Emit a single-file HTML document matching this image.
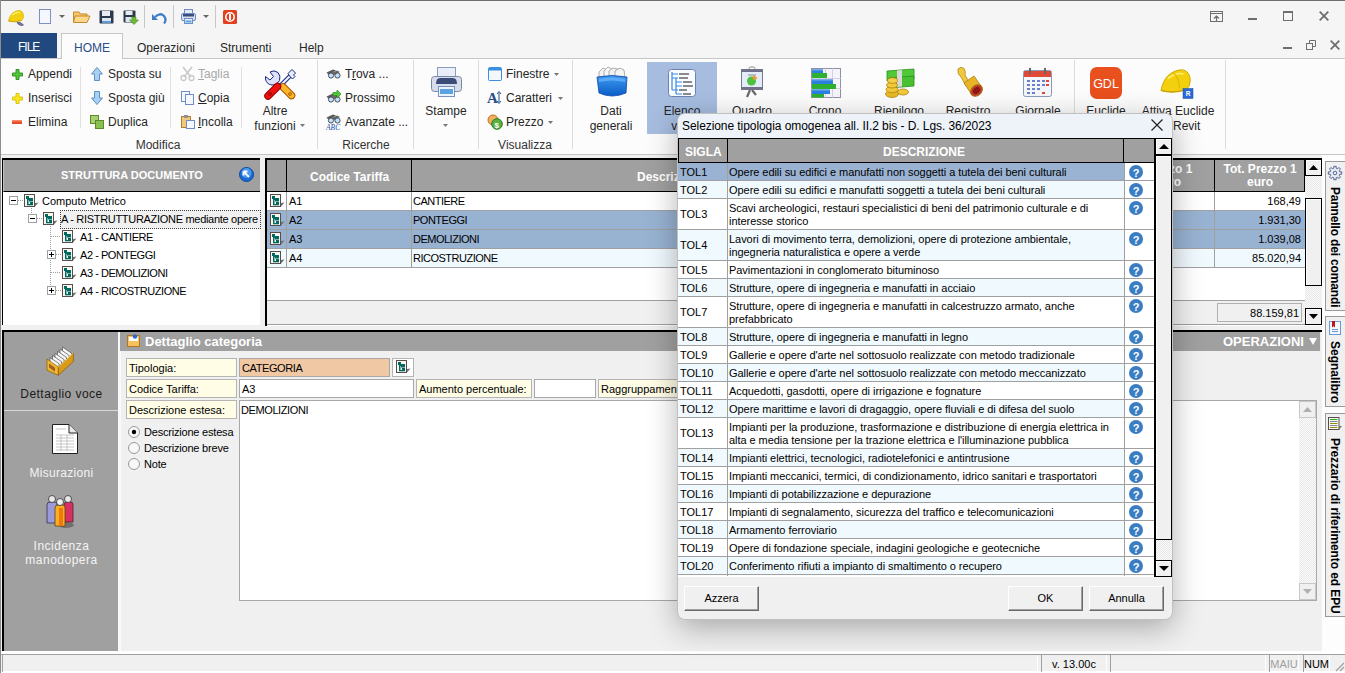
<!DOCTYPE html><html><head><meta charset="utf-8"><style>
*{box-sizing:border-box;margin:0;padding:0}
html,body{width:1345px;height:673px;overflow:hidden;background:#f0f0f0;font-family:"Liberation Sans",sans-serif;font-size:11px;color:#000}
.a{position:absolute}
.t{position:absolute;white-space:nowrap;line-height:1}
.rb{position:absolute;white-space:nowrap;line-height:1;font-size:12px;color:#262626}
.rc{position:absolute;white-space:nowrap;line-height:15px;font-size:12px;color:#262626;text-align:center}
.sep{position:absolute;width:1px;background:#dadada}
.hdr{position:absolute;background:#a0a0a0;color:#fff;font-weight:bold;font-size:11px}
svg{position:absolute;overflow:visible}
.u{text-decoration:underline}
</style></head><body>
<div class="a" style="left:0;top:0;width:1345px;height:33px;background:#f5f5f5"></div>
<div class="a" style="left:0;top:0;width:1345px;height:1px;background:#6e6e6e"></div>
<div class="a" style="left:0;top:0;width:1px;height:673px;background:#8c8c8c"></div>
<svg style="left:8px;top:10px" width="17" height="17" viewBox="0 0 17 17"><path d="M9 12 Q13 12 15.5 15 Q13 16.5 10 14Z" fill="#7878a8" stroke="#50507a" stroke-width="0.7"/><path d="M0.5 11 Q1.5 6 4 3.5 Q8 0 12 0.5 Q15.5 1.5 15.5 6 Q15.5 9 13.5 10.5 Q7 12.5 0.5 11Z" fill="#f2d010" stroke="#d8b000" stroke-width="0.7"/><path d="M4 5 Q8 1.5 12 2.5" fill="none" stroke="#fff070" stroke-width="1.2"/><path d="M0.5 11 Q7 13 13.5 10.5" fill="none" stroke="#c8a000" stroke-width="0.8"/></svg>
<svg style="left:39px;top:9px" width="12" height="15" viewBox="0 0 12 15"><rect x="0.5" y="0.5" width="11" height="14" fill="#f4f7fc" stroke="#7d8fc4"/></svg>
<svg style="left:59px;top:15px" width="6" height="4" viewBox="0 0 6 4"><path d="M0 0 L6 0 L3 3Z" fill="#666"/></svg>
<svg style="left:73px;top:11px" width="17" height="12" viewBox="0 0 17 12"><path d="M0.5 1 L6 1 L7.5 3 L14 3 L14 11 L0.5 11Z" fill="#f6c66a" stroke="#c78b2a"/><path d="M2 5 L17 5 L14 11.5 L0.5 11.5Z" fill="#fbd88b" stroke="#c78b2a"/></svg>
<svg style="left:99px;top:10px" width="15" height="14" viewBox="0 0 15 14"><rect x="0.5" y="0.5" width="14" height="13" rx="1" fill="#2d3a4e"/><rect x="3" y="1" width="8" height="5" fill="#e8ecf2"/><rect x="3" y="8" width="9" height="5" fill="#dde6f0"/><rect x="3" y="11" width="9" height="2" fill="#5b9bd5"/></svg>
<svg style="left:123px;top:10px" width="16" height="15" viewBox="0 0 16 15"><rect x="0.5" y="0.5" width="12" height="12" rx="1" fill="#2d3a4e"/><rect x="2.5" y="1" width="7" height="4" fill="#e8ecf2"/><rect x="2.5" y="7" width="8" height="5" fill="#dde6f0"/><path d="M9 7 L13 7 L13 10 L15.5 10 L11 14.5 L6.5 10 L9 10Z" fill="#6fb83a" stroke="#3f8a1c" stroke-width="0.6"/></svg>
<div class="sep" style="left:144px;top:5px;height:23px;background:#c8c8c8"></div>
<svg style="left:152px;top:12px" width="15" height="12" viewBox="0 0 15 12"><path d="M3 5 Q8 0 12 4 Q15 8 12 11.5" fill="none" stroke="#3d7cc9" stroke-width="2.2"/><path d="M0 2 L6 8 L0 8Z" fill="#3d7cc9"/></svg>
<div class="sep" style="left:173px;top:5px;height:23px;background:#c8c8c8"></div>
<svg style="left:181px;top:9px" width="15" height="15" viewBox="0 0 15 15"><rect x="3.5" y="0.5" width="8" height="5" fill="#e4ecf7" stroke="#6f8cc4"/><rect x="0.5" y="4.5" width="14" height="7" rx="1.5" fill="#d8e0ee" stroke="#6f8cc4"/><rect x="2" y="5" width="11" height="2.5" fill="#3a4d78"/><rect x="3.5" y="9.5" width="8" height="5" fill="#e4ecf7" stroke="#6f8cc4"/><rect x="4.5" y="11.5" width="6" height="2" fill="#5ea6e0"/></svg>
<svg style="left:203px;top:15px" width="6" height="4" viewBox="0 0 6 4"><path d="M0 0 L6 0 L3 3Z" fill="#666"/></svg>
<div class="sep" style="left:215px;top:5px;height:23px;background:#c8c8c8"></div>
<svg style="left:223px;top:10px" width="14" height="14" viewBox="0 0 14 14"><rect x="0" y="0" width="14" height="14" rx="1.5" fill="#e2401f"/><circle cx="7" cy="7" r="4.2" fill="none" stroke="#fff" stroke-width="1.6"/><rect x="6" y="4" width="2" height="6" fill="#fff"/></svg>
<svg style="left:1210px;top:11px" width="13" height="11" viewBox="0 0 13 11"><rect x="0.5" y="0.5" width="12" height="10" fill="none" stroke="#6e6e6e"/><path d="M0.5 2.5 H12.5" stroke="#6e6e6e"/><path d="M6.5 10 V5.5 M4 7.5 L6.5 5 L9 7.5" stroke="#6e6e6e" stroke-width="1.2" fill="none"/></svg>
<div class="a" style="left:1248px;top:18px;width:9px;height:2px;background:#6e6e6e"></div>
<svg style="left:1283px;top:11px" width="10" height="10" viewBox="0 0 10 10"><rect x="0.5" y="0.5" width="9" height="9" fill="none" stroke="#6e6e6e"/><rect x="0" y="0" width="10" height="2" fill="#6e6e6e"/></svg>
<svg style="left:1319px;top:11px" width="10" height="10" viewBox="0 0 10 10"><path d="M0.7 0.7 L9.3 9.3 M9.3 0.7 L0.7 9.3" stroke="#6e6e6e" stroke-width="1.8"/></svg>
<div class="a" style="left:1px;top:33px;width:1344px;height:25px;background:#f5f5f5"></div>
<div class="a" style="left:1px;top:33px;width:56px;height:26px;background:#22497f"></div>
<div class="t" style="left:18px;top:41px;font-size:12px;letter-spacing:-1px;color:#fff">FILE</div>
<div class="a" style="left:1px;top:58px;width:1344px;height:97px;background:#fcfcfc;border-top:1px solid #c6c6c6;border-bottom:1px solid #c6c6c6"></div>
<div class="a" style="left:61px;top:33px;width:62px;height:26px;background:#fcfcfc;border:1px solid #c6c6c6;border-bottom:none"></div>
<div class="t" style="left:74px;top:42px;font-size:12px;color:#2a4c87">HOME</div>
<div class="t" style="left:137px;top:42px;font-size:12px;color:#262626">Operazioni</div>
<div class="t" style="left:220px;top:42px;font-size:12px;color:#262626">Strumenti</div>
<div class="t" style="left:299px;top:42px;font-size:12px;color:#262626">Help</div>
<div class="a" style="left:1283px;top:47px;width:9px;height:2px;background:#6e6e6e"></div>
<svg style="left:1306px;top:40px" width="10" height="10" viewBox="0 0 10 10"><rect x="0.5" y="3.5" width="6" height="6" fill="none" stroke="#6e6e6e"/><path d="M3.5 3.5 V0.5 H9.5 V6.5 H6.5" fill="none" stroke="#6e6e6e"/></svg>
<svg style="left:1330px;top:40px" width="10" height="10" viewBox="0 0 10 10"><path d="M0.7 0.7 L9.3 9.3 M9.3 0.7 L0.7 9.3" stroke="#6e6e6e" stroke-width="1.8"/></svg>
<svg style="left:12px;top:69px" width="11" height="11" viewBox="0 0 11 11"><path d="M4 0.5 H7 V4 H10.5 V7 H7 V10.5 H4 V7 H0.5 V4 H4Z" fill="#50c838" stroke="#2a8a1e" stroke-width="0.9"/></svg>
<div class="rb" style="left:28px;top:68px;color:#262626">Appendi</div>
<svg style="left:12px;top:93px" width="11" height="11" viewBox="0 0 11 11"><path d="M4 0.5 H7 V4 H10.5 V7 H7 V10.5 H4 V7 H0.5 V4 H4Z" fill="#f8e820" stroke="#d8c000" stroke-width="0.9"/></svg>
<div class="rb" style="left:28px;top:92px;color:#262626">Inserisci</div>
<svg style="left:12px;top:120px" width="11" height="4" viewBox="0 0 11 4"><rect x="0" y="0" width="10" height="4" fill="#e84c2a"/><rect x="0" y="0" width="10" height="1.5" fill="#f58a6a"/></svg>
<div class="rb" style="left:28px;top:116px;color:#262626">Elimina</div>
<div class="sep" style="left:80px;top:67px;height:61px;background:#e0e0e0"></div>
<svg style="left:91px;top:67px" width="12" height="14" viewBox="0 0 12 14"><path d="M6 0.5 L11.5 7 L8.5 7 L8.5 13.5 L3.5 13.5 L3.5 7 L0.5 7Z" fill="#a9d0f0" stroke="#5b8fc8"/></svg>
<div class="rb" style="left:108px;top:68px;color:#262626">Sposta su</div>
<svg style="left:91px;top:91px" width="12" height="14" viewBox="0 0 12 14"><path d="M6 13.5 L11.5 7 L8.5 7 L8.5 0.5 L3.5 0.5 L3.5 7 L0.5 7Z" fill="#a9d0f0" stroke="#5b8fc8"/></svg>
<div class="rb" style="left:108px;top:92px;color:#262626">Sposta giù</div>
<svg style="left:90px;top:115px" width="14" height="14" viewBox="0 0 14 14"><rect x="0.5" y="0.5" width="8" height="8" fill="#a8d070" stroke="#5a8a2a"/><rect x="5.5" y="5.5" width="8" height="8" fill="#8ac050" stroke="#5a8a2a"/></svg>
<div class="rb" style="left:108px;top:116px;color:#262626">Duplica</div>
<div class="sep" style="left:170px;top:67px;height:61px;background:#e0e0e0"></div>
<svg style="left:180px;top:67px" width="15" height="14" viewBox="0 0 15 14"><path d="M3 0 L11 10 M12 0 L4 10" stroke="#c8c8c8" stroke-width="1.5"/><circle cx="3.5" cy="11" r="2.5" fill="none" stroke="#c8c8c8" stroke-width="1.3"/><circle cx="11.5" cy="11" r="2.5" fill="none" stroke="#c8c8c8" stroke-width="1.3"/></svg>
<div class="rb" style="left:198px;top:68px;color:#a8a8a8"><span class="u">T</span>aglia</div>
<svg style="left:181px;top:91px" width="13" height="14" viewBox="0 0 13 14"><rect x="0.5" y="0.5" width="8" height="10" fill="#f4f7fc" stroke="#6f8cc4"/><rect x="4.5" y="3.5" width="8" height="10" fill="#f4f7fc" stroke="#6f8cc4"/></svg>
<div class="rb" style="left:198px;top:92px;color:#262626"><span class="u">C</span>opia</div>
<svg style="left:181px;top:115px" width="14" height="14" viewBox="0 0 14 14"><rect x="0.5" y="1.5" width="9" height="11" fill="#f0c880" stroke="#b08030"/><rect x="3" y="0" width="4" height="3" fill="#909090"/><rect x="5.5" y="5.5" width="8" height="8" fill="#f4f7fc" stroke="#6f8cc4"/></svg>
<div class="rb" style="left:198px;top:116px;color:#262626"><span class="u">I</span>ncolla</div>
<div class="sep" style="left:241px;top:67px;height:61px;background:#e0e0e0"></div>
<svg style="left:262px;top:67px" width="35" height="33" viewBox="0 0 35 33"><path d="M18 19 L29 8" stroke="#1a2a80" stroke-width="4.2"/><path d="M18 19 L29 8" stroke="#eef0ff" stroke-width="2.2"/><path d="M26 6.5 L30 2.5 L33.5 6 L31.5 8 L33 9.5 L30.5 12 L27.5 9Z" fill="#e8ecff" stroke="#1a2a80" stroke-width="1"/><path d="M3.5 9.5 L8 13 L11.5 9.5 L8 5 Q12 2.5 16 5.5 Q19 9 17.5 13.5 Q15 18 10 18 Q4.5 17.5 3.5 12Z" fill="#dfe2fb" stroke="#1a2a80" stroke-width="1"/><path d="M29.5 28.5 L21 20" stroke="#a85000" stroke-width="7.5" stroke-linecap="round"/><path d="M29.5 28.5 L21 20" stroke="#f8b828" stroke-width="5.5" stroke-linecap="round"/><path d="M6 29 L15.5 19.5" stroke="#900000" stroke-width="7.5" stroke-linecap="round"/><path d="M6 29 L15.5 19.5" stroke="#f01010" stroke-width="5.5" stroke-linecap="round"/><circle cx="8" cy="27" r="1.4" fill="none" stroke="#900000" stroke-width="0.9"/><circle cx="28" cy="27" r="1.4" fill="none" stroke="#a85000" stroke-width="0.9"/></svg>
<div class="rc" style="left:215px;width:120px;top:104px">Altre<br>funzioni</div>
<svg style="left:300px;top:124px" width="6" height="3" viewBox="0 0 6 3"><path d="M0 0 L5 0 L2.5 3Z" fill="#777"/></svg>
<div class="rc" style="left:98px;width:120px;top:138px;color:#333">Modifica</div>
<div class="sep" style="left:317px;top:60px;height:89px;background:#dcdcdc"></div>
<svg style="left:326px;top:69px" width="15" height="11" viewBox="0 0 15 11"><path d="M0.5 3.5 L7 0.5 L10 1.5 L4 5Z" fill="#5a5a5a"/><path d="M5 4 L11 1.5 L14 3 L8 6Z" fill="#6a6a6a"/><path d="M0.5 3.5 L4 5 L8 6 L3 6Z" fill="#3a3a3a"/><circle cx="5" cy="6.5" r="2.6" fill="#c0e0ff" stroke="#404040" stroke-width="0.9"/><circle cx="11.5" cy="6.5" r="2.6" fill="#c0e0ff" stroke="#404040" stroke-width="0.9"/></svg>
<div class="rb" style="left:345px;top:68px;color:#262626">T<span class="u">r</span>ova ...</div>
<svg style="left:326px;top:93px" width="15" height="11" viewBox="0 0 15 11"><path d="M0.5 3.5 L7 0.5 L10 1.5 L4 5Z" fill="#5a5a5a"/><path d="M5 4 L11 1.5 L14 3 L8 6Z" fill="#6a6a6a"/><path d="M0.5 3.5 L4 5 L8 6 L3 6Z" fill="#3a3a3a"/><circle cx="5" cy="6.5" r="2.6" fill="#c0e0ff" stroke="#404040" stroke-width="0.9"/><circle cx="11.5" cy="6.5" r="2.6" fill="#c0e0ff" stroke="#404040" stroke-width="0.9"/><path d="M7 -0.5 L11 -0.5 L11 -3 L15 1 L11 5 L11 2.5 L7 2.5Z" fill="#50c838" stroke="#2a8a1e" stroke-width="0.7"/></svg>
<div class="rb" style="left:345px;top:92px;color:#262626">Prossimo</div>
<svg style="left:326px;top:114px" width="15" height="11" viewBox="0 0 15 11"><path d="M0.5 3.5 L7 0.5 L10 1.5 L4 5Z" fill="#5a5a5a"/><path d="M5 4 L11 1.5 L14 3 L8 6Z" fill="#6a6a6a"/><path d="M0.5 3.5 L4 5 L8 6 L3 6Z" fill="#3a3a3a"/><circle cx="5" cy="6.5" r="2.6" fill="#c0e0ff" stroke="#404040" stroke-width="0.9"/><circle cx="11.5" cy="6.5" r="2.6" fill="#c0e0ff" stroke="#404040" stroke-width="0.9"/><text x="0" y="15.5" font-family="Liberation Serif" font-style="italic" font-size="7.5" fill="#2050b0">ABC</text></svg>
<div class="rb" style="left:345px;top:116px;color:#262626">Avanzate ...</div>
<div class="sep" style="left:413px;top:60px;height:89px;background:#dcdcdc"></div>
<svg style="left:431px;top:67px" width="31" height="30" viewBox="0 0 31 30"><rect x="6.5" y="0.5" width="18" height="12" fill="#eaeef8" stroke="#8a9ac0"/><rect x="0.5" y="9.5" width="30" height="15" rx="3" fill="#d6dcea" stroke="#7a88a8"/><path d="M5 17 Q5 11 9 11 H22 Q26 11 26 17Z" fill="#3c4c78"/><rect x="7.5" y="19.5" width="16" height="10" fill="#eef3fb" stroke="#7a90c0"/><rect x="9" y="22" width="13" height="5" fill="#5aa2e2"/></svg>
<div class="rc" style="left:386px;width:120px;top:104px">Stampe</div>
<svg style="left:443px;top:124px" width="6" height="3" viewBox="0 0 6 3"><path d="M0 0 L5 0 L2.5 3Z" fill="#777"/></svg>
<div class="rc" style="left:306px;width:120px;top:138px;color:#333">Ricerche</div>
<div class="sep" style="left:478px;top:60px;height:89px;background:#dcdcdc"></div>
<svg style="left:488px;top:67px" width="14" height="14" viewBox="0 0 14 14"><rect x="0.5" y="0.5" width="13" height="13" rx="1" fill="#f4f7fc" stroke="#3a90e0"/><rect x="1" y="1" width="12" height="2.5" fill="#3a90e0"/></svg>
<div class="rb" style="left:506px;top:68px;color:#262626">Finestre</div>
<svg style="left:554px;top:73px" width="6" height="3" viewBox="0 0 6 3"><path d="M0 0 L5 0 L2.5 3Z" fill="#777"/></svg>
<svg style="left:487px;top:91px" width="16" height="13" viewBox="0 0 16 13"><text x="0" y="12" font-family="Liberation Serif" font-weight="bold" font-size="15" fill="#2a4c87">A</text><path d="M12 2 V11 M10 3 L12 0.5 L14 3 M10 10 L12 12.5 L14 10" stroke="#2a4c87" fill="none"/></svg>
<div class="rb" style="left:506px;top:92px;color:#262626">Caratteri</div>
<svg style="left:558px;top:97px" width="6" height="3" viewBox="0 0 6 3"><path d="M0 0 L5 0 L2.5 3Z" fill="#777"/></svg>
<svg style="left:487px;top:114px" width="16" height="16" viewBox="0 0 16 16"><circle cx="6" cy="6" r="5" fill="#f0b060" stroke="#c07020"/><circle cx="10" cy="10" r="5.3" fill="#5cb040" stroke="#2a7a1e"/><text x="7.5" y="13.5" font-family="Liberation Sans" font-weight="bold" font-size="8" fill="#fff">$</text></svg>
<div class="rb" style="left:506px;top:116px;color:#262626">Prezzo</div>
<svg style="left:548px;top:121px" width="6" height="3" viewBox="0 0 6 3"><path d="M0 0 L5 0 L2.5 3Z" fill="#777"/></svg>
<div class="rc" style="left:465px;width:120px;top:138px;color:#333">Visualizza</div>
<div class="sep" style="left:572px;top:60px;height:89px;background:#dcdcdc"></div>
<div class="a" style="left:647px;top:62px;width:70px;height:72px;background:#a6bde0"></div>
<svg style="left:596px;top:66px" width="32" height="32" viewBox="0 0 32 32"><defs><linearGradient id="bx" x1="0" y1="0" x2="0" y2="1"><stop offset="0" stop-color="#3f9af0"/><stop offset="1" stop-color="#0a5cc8"/></linearGradient></defs><path d="M3 6 L7 2 L11 4 L11 12 L3 12Z" fill="#f2f2f2" stroke="#9a9a9a" stroke-width="0.8"/><path d="M8 5 L12 1 L16 3 L17 12 L8 12Z" fill="#f6f6f6" stroke="#9a9a9a" stroke-width="0.8"/><path d="M13 5 L17 2 L22 3 L22 12 L13 12Z" fill="#f0f0f0" stroke="#9a9a9a" stroke-width="0.8"/><path d="M19 5 L24 2 L28 4 L29 12 L19 12Z" fill="#f4f4f4" stroke="#9a9a9a" stroke-width="0.8"/><path d="M1 11 Q16 8 31 11 L30 27 Q16 33 3 27Z" fill="url(#bx)" stroke="#0a4aa8" stroke-width="0.8"/><path d="M3 13 Q16 10 29 13 L29 16 Q16 13 3 16Z" fill="#6cb8ff" opacity="0.7"/></svg>
<div class="rc" style="left:551px;width:120px;top:104px">Dati<br>generali</div>
<svg style="left:668px;top:69px" width="28" height="28" viewBox="0 0 28 28"><rect x="0.5" y="0.5" width="27" height="27" rx="3" fill="#f8fbff" stroke="#7080b0"/><path d="M4 3 V21 M4 5 H10 M4 9 H10 M8 9 V25 M8 13 H14 M8 17 H14 M4 21 H10 M8 25 H14" stroke="#3a8ae0" stroke-width="1.2" fill="none"/><g stroke="#8a8a8a" stroke-width="2"><path d="M11 5 H21 M11 9 H20 M15 13 H24 M15 17 H25 M11 21 H19 M15 25 H23"/></g></svg>
<div class="rc" style="left:622px;width:120px;top:104px">Elenco<br>voci</div>
<svg style="left:741px;top:67px" width="23" height="31" viewBox="0 0 23 31"><rect x="8" y="0" width="6" height="3" rx="1.5" fill="none" stroke="#8a8a8a"/><rect x="0.5" y="2.5" width="21" height="20" fill="#e4ecf8" stroke="#7a7a8a"/><rect x="0.5" y="2.5" width="21" height="2.5" fill="#70708a"/><rect x="0.5" y="20" width="21" height="2.5" fill="#70708a"/><path d="M7 8 H15" stroke="#8a8a9a"/><circle cx="10.5" cy="14" r="4.5" fill="#4cc040"/><path d="M12 8.5 L12 13 L16.5 11.5 Q15.5 9 12 8.5Z" fill="#f89830"/><path d="M9 23 L6 30 M11 23 L15 28" stroke="#6a6a6a" stroke-width="2.2"/></svg>
<div class="rc" style="left:692px;width:120px;top:104px">Quadro</div>
<svg style="left:811px;top:68px" width="30" height="30" viewBox="0 0 30 30"><rect x="0.5" y="0.5" width="29" height="29" fill="#f4f4fa" stroke="#9090a8"/><path d="M14.5 0 V30 M21.5 0 V30 M0 10.5 H30 M0 20.5 H30" stroke="#c8c8d8" stroke-width="0.8"/><rect x="1" y="1" width="11" height="4" fill="#2a80e0"/><rect x="1" y="5" width="15" height="5" fill="#30b030"/><rect x="1" y="11" width="21" height="5" fill="#2a80e0"/><rect x="1" y="16" width="24" height="5" fill="#30b030"/><rect x="1" y="21" width="18" height="5" fill="#2a80e0"/><rect x="1" y="26" width="12" height="3.5" fill="#30b030"/><g fill="#fff" opacity="0.35"><rect x="1" y="1" width="11" height="1.5"/><rect x="1" y="11" width="21" height="1.5"/><rect x="1" y="21" width="18" height="1.5"/></g></svg>
<div class="rc" style="left:765px;width:120px;top:104px">Crono</div>
<svg style="left:883px;top:68px" width="33" height="30" viewBox="0 0 33 30"><path d="M4 3 L31 1 L31 11 L4 13Z" fill="#50c838" stroke="#2a9020" stroke-width="0.8"/><path d="M6 10 L31 8 L31 18 L6 20Z" fill="#48c030" stroke="#2a9020" stroke-width="0.8"/><path d="M14 2.5 L19 2 L19 18.5 L14 19Z" fill="#d8d8d8"/><ellipse cx="9" cy="26" rx="6.5" ry="3.5" fill="#e8b828" stroke="#b08010" stroke-width="0.8"/><ellipse cx="9" cy="21.5" rx="6" ry="3.2" fill="#f0c838" stroke="#b08010" stroke-width="0.8"/><ellipse cx="9" cy="17" rx="5.5" ry="3" fill="#f0c838" stroke="#b08010" stroke-width="0.8"/><ellipse cx="9.5" cy="12.5" rx="5" ry="2.8" fill="#f4d048" stroke="#b08010" stroke-width="0.8"/><ellipse cx="20" cy="24" rx="5.5" ry="3" fill="#f0c838" stroke="#b08010" stroke-width="0.8"/></svg>
<div class="rc" style="left:839px;width:120px;top:104px">Riepilogo</div>
<svg style="left:956px;top:67px" width="26" height="31" viewBox="0 0 26 31"><path d="M2 2 Q5 -1 8 1.5 Q10 4 9 8 L14 16 L10 19 L5 10 Q1 7 2 2Z" fill="#f0c840" stroke="#b08a10" stroke-width="0.8"/><path d="M8 16 L18 9 L25 19 L16 28Z" fill="#e8b428" stroke="#a88010" stroke-width="0.8"/><ellipse cx="20.5" cy="23.5" rx="6.5" ry="5" transform="rotate(-40 20.5 23.5)" fill="#c83828" stroke="#a07010"/><ellipse cx="20.5" cy="23.5" rx="4" ry="3" transform="rotate(-40 20.5 23.5)" fill="#8a1818"/></svg>
<div class="rc" style="left:908px;width:120px;top:104px">Registro</div>
<svg style="left:1023px;top:68px" width="29" height="29" viewBox="0 0 29 29"><rect x="0.5" y="2.5" width="28" height="26" rx="2" fill="#f4f6fa" stroke="#8a9ab8"/><rect x="1" y="3" width="27" height="6" fill="#e04838"/><path d="M7 0 V6 M22 0 V6" stroke="#666" stroke-width="2"/><g fill="#6a80c8"><rect x="4" y="12" width="3" height="2"/><rect x="9" y="12" width="3" height="2"/><rect x="14" y="12" width="3" height="2"/><rect x="19" y="12" width="3" height="2"/><rect x="4" y="16" width="3" height="2"/><rect x="9" y="16" width="3" height="2"/><rect x="14" y="16" width="3" height="2"/><rect x="19" y="16" width="3" height="2"/><rect x="4" y="20" width="3" height="2"/><rect x="9" y="20" width="3" height="2"/><rect x="14" y="20" width="3" height="2"/><rect x="4" y="24" width="3" height="2"/><rect x="9" y="24" width="3" height="2"/></g><g fill="#e04838"><rect x="23" y="12" width="3" height="2"/><rect x="23" y="16" width="3" height="2"/><rect x="19" y="24" width="3" height="2"/></g></svg>
<div class="rc" style="left:978px;width:120px;top:104px">Giornale</div>
<div class="sep" style="left:1074px;top:60px;height:89px;background:#dcdcdc"></div>
<svg style="left:1090px;top:67px" width="32" height="32" viewBox="0 0 32 32"><rect x="0" y="0" width="32" height="32" rx="7" fill="#e8501e"/><text x="16" y="20.5" text-anchor="middle" font-family="Liberation Sans" font-size="12.5" fill="#fff">GDL</text></svg>
<div class="rc" style="left:1046px;width:120px;top:104px">Euclide</div>
<svg style="left:1160px;top:69px" width="34" height="30" viewBox="0 0 34 30"><g transform="scale(1.95)"><path d="M0.5 11 Q1.5 6 4 3.5 Q8 0 12 0.5 Q15.5 1.5 15.5 6 Q15.5 9 13.5 10.5 Q7 12.5 0.5 11Z" fill="#f2d010" stroke="#d0a800" stroke-width="0.5"/><path d="M4 5 Q8 1.5 12 2.5" fill="none" stroke="#fff070" stroke-width="0.8"/><path d="M7 2 Q10 5 10 10" fill="none" stroke="#e0b800" stroke-width="0.6"/><path d="M0.5 11 Q7 13 13.5 10.5" fill="none" stroke="#c8a000" stroke-width="0.6"/></g><rect x="23" y="19.5" width="10" height="10" fill="#2a6ad8" stroke="#1a4aa0" stroke-width="0.5"/><text x="28" y="27" text-anchor="middle" font-family="Liberation Sans" font-weight="bold" font-size="6.5" fill="#fff">R</text></svg>
<div class="rc" style="left:1118px;width:120px;top:104px">Attiva Euclide</div>
<div class="rb" style="left:1173px;top:120px;color:#262626">Revit</div>
<div class="sep" style="left:1225px;top:60px;height:89px;background:#dcdcdc"></div>
<div class="a" style="left:2px;top:158px;width:258px;height:167px;background:#fff;border-top:2px solid #000;border-left:1px solid #000"></div>
<div class="hdr" style="left:3px;top:160px;width:257px;height:32px;border-bottom:1px solid #000;border-left:1px solid #c0c0c0"></div>
<div class="t" style="left:61px;top:170px;font-size:11px;font-weight:bold;color:#fff">STRUTTURA DOCUMENTO</div>
<svg style="left:239px;top:167px" width="15" height="15" viewBox="0 0 15 15"><circle cx="7.5" cy="7.5" r="7" fill="#1a6ad0" stroke="#0a4aa0"/><circle cx="7.5" cy="6" r="5" fill="#4a9af0"/><path d="M4.5 4.5 L10 10 M4.5 4.5 H8.5 M4.5 4.5 V8.5" stroke="#fff" stroke-width="1.8" fill="none"/></svg>
<div class="a" style="left:31px;top:206px;width:1px;height:8px;background:repeating-linear-gradient(180deg,#a0a0a0 0 1px,transparent 1px 2px)"></div>
<div class="a" style="left:50px;top:224px;width:1px;height:68px;background:repeating-linear-gradient(180deg,#a0a0a0 0 1px,transparent 1px 2px)"></div>
<div class="a" style="left:18px;top:200px;width:5px;height:1px;background:repeating-linear-gradient(90deg,#a0a0a0 0 1px,transparent 1px 2px)"></div>
<div class="a" style="left:37px;top:218px;width:5px;height:1px;background:repeating-linear-gradient(90deg,#a0a0a0 0 1px,transparent 1px 2px)"></div>
<div class="a" style="left:51px;top:236px;width:10px;height:1px;background:repeating-linear-gradient(90deg,#a0a0a0 0 1px,transparent 1px 2px)"></div>
<div class="a" style="left:56px;top:254px;width:5px;height:1px;background:repeating-linear-gradient(90deg,#a0a0a0 0 1px,transparent 1px 2px)"></div>
<div class="a" style="left:51px;top:272px;width:10px;height:1px;background:repeating-linear-gradient(90deg,#a0a0a0 0 1px,transparent 1px 2px)"></div>
<div class="a" style="left:56px;top:290px;width:5px;height:1px;background:repeating-linear-gradient(90deg,#a0a0a0 0 1px,transparent 1px 2px)"></div>
<svg style="left:9px;top:196px" width="9" height="9" viewBox="0 0 9 9"><rect x="0.5" y="0.5" width="8" height="8" fill="#fff" stroke="#a0a0a0"/><path d="M2 4.5 H7" stroke="#000"/></svg>
<svg style="left:24px;top:194px" width="15" height="14" viewBox="0 0 15 14"><rect x="0.5" y="0.5" width="10" height="12" fill="#faf8ec" stroke="#5a4c4c"/><path d="M11 9 L14.5 8.5 L11 12.5Z" fill="#707070"/><g fill="#006a62"><rect x="2" y="2" width="3" height="3"/><rect x="3" y="5" width="1.5" height="6"/><rect x="5" y="4" width="4" height="3.5"/><rect x="6" y="8" width="3" height="3"/><rect x="3" y="10" width="6" height="1.3"/><rect x="4" y="5" width="1" height="1"/></g></svg>
<div class="t" style="left:42px;top:196px">Computo Metrico</div>
<svg style="left:28px;top:214px" width="9" height="9" viewBox="0 0 9 9"><rect x="0.5" y="0.5" width="8" height="8" fill="#fff" stroke="#a0a0a0"/><path d="M2 4.5 H7" stroke="#000"/></svg>
<svg style="left:43px;top:212px" width="15" height="14" viewBox="0 0 15 14"><rect x="0.5" y="0.5" width="10" height="12" fill="#faf8ec" stroke="#5a4c4c"/><path d="M11 9 L14.5 8.5 L11 12.5Z" fill="#707070"/><g fill="#006a62"><rect x="2" y="2" width="3" height="3"/><rect x="3" y="5" width="1.5" height="6"/><rect x="5" y="4" width="4" height="3.5"/><rect x="6" y="8" width="3" height="3"/><rect x="3" y="10" width="6" height="1.3"/><rect x="4" y="5" width="1" height="1"/></g></svg>
<div class="a" style="left:60px;top:210px;width:201px;height:19px;background:#f0f0f0;border:1px dotted #404040"></div>
<div class="t" style="left:61px;top:214px;letter-spacing:-0.3px">A - RISTRUTTURAZIONE mediante opere</div>
<svg style="left:62px;top:230px" width="15" height="14" viewBox="0 0 15 14"><rect x="0.5" y="0.5" width="10" height="12" fill="#faf8ec" stroke="#5a4c4c"/><path d="M11 9 L14.5 8.5 L11 12.5Z" fill="#707070"/><g fill="#006a62"><rect x="2" y="2" width="3" height="3"/><rect x="3" y="5" width="1.5" height="6"/><rect x="5" y="4" width="4" height="3.5"/><rect x="6" y="8" width="3" height="3"/><rect x="3" y="10" width="6" height="1.3"/><rect x="4" y="5" width="1" height="1"/></g></svg>
<div class="t" style="left:80px;top:232px;letter-spacing:-0.45px">A1 - CANTIERE</div>
<svg style="left:62px;top:248px" width="15" height="14" viewBox="0 0 15 14"><rect x="0.5" y="0.5" width="10" height="12" fill="#faf8ec" stroke="#5a4c4c"/><path d="M11 9 L14.5 8.5 L11 12.5Z" fill="#707070"/><g fill="#006a62"><rect x="2" y="2" width="3" height="3"/><rect x="3" y="5" width="1.5" height="6"/><rect x="5" y="4" width="4" height="3.5"/><rect x="6" y="8" width="3" height="3"/><rect x="3" y="10" width="6" height="1.3"/><rect x="4" y="5" width="1" height="1"/></g></svg>
<svg style="left:47px;top:250px" width="9" height="9" viewBox="0 0 9 9"><rect x="0.5" y="0.5" width="8" height="8" fill="#fff" stroke="#a0a0a0"/><path d="M2 4.5 H7" stroke="#000"/><path d="M4.5 2 V7" stroke="#000"/></svg>
<div class="t" style="left:80px;top:250px;letter-spacing:-0.45px">A2 - PONTEGGI</div>
<svg style="left:62px;top:266px" width="15" height="14" viewBox="0 0 15 14"><rect x="0.5" y="0.5" width="10" height="12" fill="#faf8ec" stroke="#5a4c4c"/><path d="M11 9 L14.5 8.5 L11 12.5Z" fill="#707070"/><g fill="#006a62"><rect x="2" y="2" width="3" height="3"/><rect x="3" y="5" width="1.5" height="6"/><rect x="5" y="4" width="4" height="3.5"/><rect x="6" y="8" width="3" height="3"/><rect x="3" y="10" width="6" height="1.3"/><rect x="4" y="5" width="1" height="1"/></g></svg>
<div class="t" style="left:80px;top:268px;letter-spacing:-0.45px">A3 - DEMOLIZIONI</div>
<svg style="left:62px;top:284px" width="15" height="14" viewBox="0 0 15 14"><rect x="0.5" y="0.5" width="10" height="12" fill="#faf8ec" stroke="#5a4c4c"/><path d="M11 9 L14.5 8.5 L11 12.5Z" fill="#707070"/><g fill="#006a62"><rect x="2" y="2" width="3" height="3"/><rect x="3" y="5" width="1.5" height="6"/><rect x="5" y="4" width="4" height="3.5"/><rect x="6" y="8" width="3" height="3"/><rect x="3" y="10" width="6" height="1.3"/><rect x="4" y="5" width="1" height="1"/></g></svg>
<svg style="left:47px;top:286px" width="9" height="9" viewBox="0 0 9 9"><rect x="0.5" y="0.5" width="8" height="8" fill="#fff" stroke="#a0a0a0"/><path d="M2 4.5 H7" stroke="#000"/><path d="M4.5 2 V7" stroke="#000"/></svg>
<div class="t" style="left:80px;top:286px;letter-spacing:-0.45px">A4 - RICOSTRUZIONE</div>
<div class="a" style="left:265px;top:158px;width:1057px;height:168px;background:#fff;border-top:2px solid #000;border-left:2px solid #000"></div>
<div class="hdr" style="left:267px;top:160px;width:1037px;height:32px;border-bottom:1px solid #000"></div>
<div class="a" style="left:286px;top:160px;width:1px;height:31px;background:#000"></div>
<div class="a" style="left:411px;top:160px;width:1px;height:31px;background:#000"></div>
<div class="a" style="left:1214px;top:160px;width:1px;height:31px;background:#000"></div>
<div class="t" style="left:310px;top:171px;font-size:12px;font-weight:bold;color:#fff">Codice Tariffa</div>
<div class="t" style="left:637px;top:171px;font-size:12px;font-weight:bold;color:#fff">Descrizione</div>
<div class="t" style="left:1138px;top:163px;font-size:12px;font-weight:bold;color:#fff;line-height:13px;text-align:center;width:60px">Prezzo 1<br>euro</div>
<div class="t" style="left:1216px;top:163px;font-size:12px;font-weight:bold;color:#fff;line-height:13px;text-align:center;width:88px">Tot. Prezzo 1<br>euro</div>
<div class="a" style="left:267px;top:192px;width:1038px;height:19px;background:#ffffff;border-bottom:1px solid #a0a0a0"></div>
<svg style="left:270px;top:194px" width="15" height="14" viewBox="0 0 15 14"><rect x="0.5" y="0.5" width="10" height="12" fill="#faf8ec" stroke="#5a4c4c"/><path d="M11 9 L14.5 8.5 L11 12.5Z" fill="#707070"/><g fill="#006a62"><rect x="2" y="2" width="3" height="3"/><rect x="3" y="5" width="1.5" height="6"/><rect x="5" y="4" width="4" height="3.5"/><rect x="6" y="8" width="3" height="3"/><rect x="3" y="10" width="6" height="1.3"/><rect x="4" y="5" width="1" height="1"/></g></svg>
<div class="t" style="left:289px;top:196px">A1</div>
<div class="t" style="left:413px;top:196px;letter-spacing:-0.5px">CANTIERE</div>
<div class="t" style="left:1214px;top:196px;width:87px;text-align:right">168,49</div>
<div class="a" style="left:267px;top:211px;width:1038px;height:19px;background:#98b2d2;border-bottom:1px solid #a0a0a0"></div>
<svg style="left:270px;top:213px" width="15" height="14" viewBox="0 0 15 14"><rect x="0.5" y="0.5" width="10" height="12" fill="#faf8ec" stroke="#5a4c4c"/><path d="M11 9 L14.5 8.5 L11 12.5Z" fill="#707070"/><g fill="#006a62"><rect x="2" y="2" width="3" height="3"/><rect x="3" y="5" width="1.5" height="6"/><rect x="5" y="4" width="4" height="3.5"/><rect x="6" y="8" width="3" height="3"/><rect x="3" y="10" width="6" height="1.3"/><rect x="4" y="5" width="1" height="1"/></g></svg>
<div class="t" style="left:289px;top:215px">A2</div>
<div class="t" style="left:413px;top:215px;letter-spacing:-0.5px">PONTEGGI</div>
<div class="t" style="left:1214px;top:215px;width:87px;text-align:right">1.931,30</div>
<div class="a" style="left:267px;top:230px;width:1038px;height:19px;background:#98b2d2;border-bottom:1px solid #a0a0a0"></div>
<svg style="left:270px;top:232px" width="15" height="14" viewBox="0 0 15 14"><rect x="0.5" y="0.5" width="10" height="12" fill="#faf8ec" stroke="#5a4c4c"/><path d="M11 9 L14.5 8.5 L11 12.5Z" fill="#707070"/><g fill="#006a62"><rect x="2" y="2" width="3" height="3"/><rect x="3" y="5" width="1.5" height="6"/><rect x="5" y="4" width="4" height="3.5"/><rect x="6" y="8" width="3" height="3"/><rect x="3" y="10" width="6" height="1.3"/><rect x="4" y="5" width="1" height="1"/></g></svg>
<div class="t" style="left:289px;top:234px">A3</div>
<div class="t" style="left:413px;top:234px;letter-spacing:-0.5px">DEMOLIZIONI</div>
<div class="t" style="left:1214px;top:234px;width:87px;text-align:right">1.039,08</div>
<div class="a" style="left:267px;top:249px;width:1038px;height:19px;background:#f0f9fe;border-bottom:1px solid #a0a0a0"></div>
<svg style="left:270px;top:251px" width="15" height="14" viewBox="0 0 15 14"><rect x="0.5" y="0.5" width="10" height="12" fill="#faf8ec" stroke="#5a4c4c"/><path d="M11 9 L14.5 8.5 L11 12.5Z" fill="#707070"/><g fill="#006a62"><rect x="2" y="2" width="3" height="3"/><rect x="3" y="5" width="1.5" height="6"/><rect x="5" y="4" width="4" height="3.5"/><rect x="6" y="8" width="3" height="3"/><rect x="3" y="10" width="6" height="1.3"/><rect x="4" y="5" width="1" height="1"/></g></svg>
<div class="t" style="left:289px;top:253px">A4</div>
<div class="t" style="left:413px;top:253px;letter-spacing:-0.5px">RICOSTRUZIONE</div>
<div class="t" style="left:1214px;top:253px;width:87px;text-align:right">85.020,94</div>
<div class="a" style="left:286px;top:192px;width:1px;height:76px;background:#a0a0a0"></div>
<div class="a" style="left:411px;top:192px;width:1px;height:76px;background:#a0a0a0"></div>
<div class="a" style="left:1214px;top:192px;width:1px;height:76px;background:#a0a0a0"></div>
<div class="a" style="left:267px;top:300px;width:1038px;height:25px;background:#f0f0f0;border-top:1px solid #a0a0a0;border-bottom:1px solid #a0a0a0"></div>
<div class="a" style="left:1217px;top:303px;width:85px;height:19px;background:#f0f0f0;border:1px solid #b0b0b0"></div>
<div class="t" style="left:1217px;top:308px;width:82px;text-align:right">88.159,81</div>
<div class="a" style="left:1304px;top:160px;width:2px;height:32px;background:#000"></div>
<div class="a" style="left:1305px;top:176px;width:17px;height:149px;background:repeating-conic-gradient(#e6e6e6 0 25%,#fbfbfb 0 50%) 0 0/2px 2px"></div>
<div class="a" style="left:1306px;top:160px;width:16px;height:16px;background:#f0f0f0;border-right:1px solid #000;border-bottom:1px solid #000;box-shadow:inset 1px 1px 0 #fff"></div>
<svg style="left:1309px;top:165px" width="9" height="5" viewBox="0 0 9 5"><path d="M0 5 L4.5 0 L9 5Z" fill="#000"/></svg>
<div class="a" style="left:1305px;top:198px;width:17px;height:88px;background:#f0f0f0;border:1px solid #000;box-shadow:inset 1px 1px 0 #fff"></div>
<div class="a" style="left:1305px;top:308px;width:17px;height:17px;background:#f0f0f0;border:1px solid #000;box-shadow:inset 1px 1px 0 #fff"></div>
<svg style="left:1309px;top:314px" width="9" height="5" viewBox="0 0 9 5"><path d="M0 0 L4.5 5 L9 0Z" fill="#000"/></svg>
<div class="a" style="left:1322px;top:155px;width:23px;height:496px;background:#fdfdfd"></div>
<div class="a" style="left:1325px;top:161px;width:20px;height:150px;background:#f0f0f0;border-left:1px solid #9a9a9a;border-top:1px solid #9a9a9a;border-bottom:1px solid #9a9a9a"></div>
<div class="t" style="left:1341px;top:187px;font-size:12px;font-weight:bold;letter-spacing:-0.15px;transform-origin:0 0;transform:rotate(90deg)">Pannello dei comandi</div>
<svg style="left:1328px;top:166px" width="14" height="14" viewBox="0 0 14 14"><path d="M5.78 0.31 L8.22 0.31 L8.06 2.11 L9.71 2.80 L10.87 1.41 L12.59 3.13 L11.20 4.29 L11.89 5.94 L13.69 5.78 L13.69 8.22 L11.89 8.06 L11.20 9.71 L12.59 10.87 L10.87 12.59 L9.71 11.20 L8.06 11.89 L8.22 13.69 L5.78 13.69 L5.94 11.89 L4.29 11.20 L3.13 12.59 L1.41 10.87 L2.80 9.71 L2.11 8.06 L0.31 8.22 L0.31 5.78 L2.11 5.94 L2.80 4.29 L1.41 3.13 L3.13 1.41 L4.29 2.80 L5.94 2.11Z" fill="#e8ecf4" stroke="#4a5a8a" stroke-width="0.9"/><circle cx="7" cy="7" r="1.8" fill="none" stroke="#4a5a8a" stroke-width="0.9"/></svg>
<div class="a" style="left:1325px;top:316px;width:20px;height:91px;background:#f0f0f0;border-left:1px solid #9a9a9a;border-top:1px solid #9a9a9a;border-bottom:1px solid #9a9a9a"></div>
<div class="t" style="left:1341px;top:341px;font-size:12px;font-weight:bold;letter-spacing:0px;transform-origin:0 0;transform:rotate(90deg)">Segnalibro</div>
<svg style="left:1329px;top:321px" width="12" height="14" viewBox="0 0 12 14"><rect x="0.5" y="0.5" width="11" height="13" fill="#f4f8fc" stroke="#6a9ad8"/><path d="M3 0 V6.5 L4.5 5.2 L6 6.5 V0Z" fill="#c01818"/><rect x="3" y="8" width="6" height="1" fill="#6a9ad8"/><rect x="3" y="10" width="6" height="1" fill="#6a9ad8"/></svg>
<div class="a" style="left:1325px;top:413px;width:20px;height:204px;background:#f0f0f0;border-left:1px solid #9a9a9a;border-top:1px solid #9a9a9a;border-bottom:1px solid #9a9a9a"></div>
<div class="t" style="left:1341px;top:438px;font-size:12px;font-weight:bold;letter-spacing:-0.1px;transform-origin:0 0;transform:rotate(90deg)">Prezzario di riferimento ed EPU</div>
<svg style="left:1328px;top:417px" width="14" height="14" viewBox="0 0 14 14"><rect x="0.5" y="0.5" width="10.5" height="12" fill="#fafaf0" stroke="#5a4c4c"/><path d="M11 9 L14 9 L11 12.5Z" fill="#707070"/><rect x="2" y="2" width="7.5" height="1" fill="#20b020"/><rect x="2" y="4" width="7.5" height="1" fill="#8080a0"/><rect x="2" y="6" width="7.5" height="1" fill="#909010"/><rect x="2" y="8" width="7.5" height="1" fill="#8080a0"/><rect x="2" y="10" width="7.5" height="1" fill="#909010"/></svg>
<div class="a" style="left:2px;top:330px;width:116px;height:321px;background:#a0a0a0;border-top:2px solid #000;border-left:2px solid #000"></div>
<div class="a" style="left:4px;top:332px;width:114px;height:79px;background:#9e9e9e;border-bottom:1px solid #d8d8d8"></div>
<div class="a" style="left:118px;top:332px;width:2px;height:319px;background:#f8f8f8"></div>
<svg style="left:46px;top:346px" width="28" height="31" viewBox="0 0 28 31"><path d="M16.5 1.0 L25.5 7.2 L25.5 12.0 L16.5 6.0Z" fill="#f6f6f6" stroke="#505050" stroke-width="0.7"/><path d="M14.0 3.1 L23.0 9.3 L23.0 14.1 L14.0 8.1Z" fill="#f6f6f6" stroke="#505050" stroke-width="0.7"/><path d="M11.5 5.2 L20.5 11.4 L20.5 16.2 L11.5 10.2Z" fill="#f6f6f6" stroke="#505050" stroke-width="0.7"/><path d="M9.0 7.3 L18.0 13.5 L18.0 18.3 L9.0 12.3Z" fill="#f6f6f6" stroke="#505050" stroke-width="0.7"/><path d="M6.5 9.4 L15.5 15.6 L15.5 20.4 L6.5 14.4Z" fill="#f6f6f6" stroke="#505050" stroke-width="0.7"/><path d="M4.0 11.5 L13.0 17.7 L13.0 22.5 L4.0 16.5Z" fill="#f6f6f6" stroke="#505050" stroke-width="0.7"/><path d="M1 13 L12.4 21 L12.4 29.3 L1 24.2Z" fill="#f0b830" stroke="#8a5a00" stroke-width="0.7"/><path d="M12.4 21 L27.4 7 L27.4 15.5 L12.4 29.3Z" fill="#d89a18" stroke="#8a5a00" stroke-width="0.7"/><path d="M12.4 21 L27.4 7" stroke="#f8d060" stroke-width="1"/><rect x="3" y="18" width="6" height="4" fill="#a06020" transform="matrix(1 0.7 0 1 0 -2.5)"/></svg>
<div class="t" style="left:4px;width:115px;text-align:center;top:388px;font-size:12px;letter-spacing:0.45px;color:#1a1a1a">Dettaglio voce</div>
<svg style="left:52px;top:424px" width="26" height="30" viewBox="0 0 26 30"><path d="M0.5 0.5 H17 L25.5 9 V29.5 H0.5Z" fill="#fff" stroke="#202020"/><path d="M17 0.5 V9 H25.5" fill="#e8e8e8" stroke="#202020"/><g stroke="#b8b8b8" stroke-width="0.8" fill="none"><path d="M4 5 H14 M4 11 H22 M4 14 H22 M4 17 H22 M4 20 H22 M4 23 H22 M4 26 H22 M9 11 V27 M15 11 V27"/></g></svg>
<div class="t" style="left:4px;width:115px;text-align:center;top:467px;font-size:12px;letter-spacing:0.3px;color:#f4f4f4">Misurazioni</div>
<svg style="left:46px;top:495px" width="30" height="34" viewBox="0 0 30 34"><ellipse cx="20" cy="30" rx="8" ry="3" fill="#505050" opacity="0.6"/><path d="M1 10 Q1 7 4 7 H9 Q11 7 11 10 V28 H1Z" fill="#9a9ad8" stroke="#303050" stroke-width="0.8"/><path d="M18 10 Q18 7 21 7 H25 Q27 7 27 10 V27 H18Z" fill="#d83060" stroke="#502030" stroke-width="0.8"/><path d="M9 13 Q9 10 12 10 H17 Q19 10 19 13 V31 H9Z" fill="#f8b020" stroke="#604010" stroke-width="0.8"/><path d="M13 13 H17 V31 H13Z" fill="#f07810"/><circle cx="6" cy="4" r="3.5" fill="#e8e8e8" stroke="#303030" stroke-width="0.8"/><circle cx="22" cy="4" r="3.5" fill="#e8e8e8" stroke="#303030" stroke-width="0.8"/><circle cx="14" cy="7" r="3.5" fill="#f0f0f0" stroke="#303030" stroke-width="0.8"/></svg>
<div class="t" style="left:4px;width:115px;text-align:center;top:539px;font-size:12px;letter-spacing:0.5px;color:#f4f4f4;line-height:14px">Incidenza<br>manodopera</div>
<div class="a" style="left:2px;top:330px;width:1320px;height:2px;background:#000"></div>
<div class="a" style="left:120px;top:332px;width:1200px;height:19px;background:#a0a0a0"></div>
<svg style="left:127px;top:334px" width="13" height="13" viewBox="0 0 13 13"><rect x="0.5" y="1.5" width="12" height="11" fill="#f4c060" stroke="#b07820"/><rect x="2" y="3" width="9" height="4" fill="#fff"/><circle cx="8" cy="2.5" r="2.2" fill="#2a6ad0"/></svg>
<div class="t" style="left:145px;top:335px;font-size:13px;font-weight:bold;color:#fff">Dettaglio categoria</div>
<div class="t" style="left:1223px;top:335px;font-size:13px;font-weight:bold;color:#fff">OPERAZIONI</div>
<svg style="left:1309px;top:338px" width="8" height="7" viewBox="0 0 8 7"><path d="M0 0 L8 0 L4 7Z" fill="#fff"/></svg>
<div class="a" style="left:120px;top:351px;width:1200px;height:300px;background:#f0f0f0;border-left:1px solid #fafafa"></div>
<div class="a" style="left:126px;top:358px;width:111px;height:19px;background:#fffde6;border:1px solid #b4b4b4"></div>
<div class="t" style="left:129px;top:363px">Tipologia:</div>
<div class="a" style="left:239px;top:358px;width:151px;height:19px;background:#f0c8a4;border:1px solid #a8a8a8"></div>
<div class="t" style="left:242px;top:363px;letter-spacing:-0.4px">CATEGORIA</div>
<div class="a" style="left:392px;top:358px;width:22px;height:19px;background:#fff;border:1px solid #b4b4b4"></div>
<svg style="left:396px;top:360px" width="15" height="14" viewBox="0 0 15 14"><rect x="0.5" y="0.5" width="10" height="12" fill="#faf8ec" stroke="#5a4c4c"/><path d="M11 9 L14.5 8.5 L11 12.5Z" fill="#707070"/><g fill="#006a62"><rect x="2" y="2" width="3" height="3"/><rect x="3" y="5" width="1.5" height="6"/><rect x="5" y="4" width="4" height="3.5"/><rect x="6" y="8" width="3" height="3"/><rect x="3" y="10" width="6" height="1.3"/><rect x="4" y="5" width="1" height="1"/></g></svg>
<div class="a" style="left:126px;top:379px;width:111px;height:19px;background:#fffde6;border:1px solid #b4b4b4"></div>
<div class="t" style="left:129px;top:384px">Codice Tariffa:</div>
<div class="a" style="left:239px;top:379px;width:175px;height:19px;background:#fff;border:1px solid #a8a8a8"></div>
<div class="t" style="left:242px;top:384px;letter-spacing:0px">A3</div>
<div class="a" style="left:416px;top:379px;width:116px;height:19px;background:#fffde6;border:1px solid #b4b4b4"></div>
<div class="t" style="left:419px;top:384px">Aumento percentuale:</div>
<div class="a" style="left:534px;top:379px;width:62px;height:19px;background:#fff;border:1px solid #a8a8a8"></div>
<div class="a" style="left:598px;top:379px;width:120px;height:19px;background:#fffde6;border:1px solid #b4b4b4"></div>
<div class="t" style="left:601px;top:384px">Raggruppamento</div>
<div class="a" style="left:126px;top:400px;width:111px;height:19px;background:#fffde6;border:1px solid #b4b4b4"></div>
<div class="t" style="left:129px;top:405px">Descrizione estesa:</div>
<div class="a" style="left:239px;top:400px;width:1078px;height:201px;background:#fff;border:1px solid #a8a8a8"></div>
<div class="t" style="left:241px;top:405px;letter-spacing:-0.4px">DEMOLIZIONI</div>
<div class="a" style="left:1299px;top:401px;width:17px;height:199px;background:repeating-conic-gradient(#e8e8e8 0 25%,#fcfcfc 0 50%) 0 0/2px 2px"></div>
<div class="a" style="left:1299px;top:401px;width:17px;height:17px;background:#f0f0f0;border:1px solid #c8c8c8"></div>
<svg style="left:1303px;top:407px" width="9" height="5" viewBox="0 0 9 5"><path d="M0 5 L4.5 0 L9 5Z" fill="#b0b0b0"/></svg>
<div class="a" style="left:1299px;top:583px;width:17px;height:17px;background:#f0f0f0;border:1px solid #c8c8c8"></div>
<svg style="left:1303px;top:589px" width="9" height="5" viewBox="0 0 9 5"><path d="M0 0 L4.5 5 L9 0Z" fill="#b0b0b0"/></svg>
<svg style="left:128px;top:426px" width="12" height="12" viewBox="0 0 12 12"><circle cx="6" cy="6" r="5.5" fill="#f8f8f8" stroke="#9a9a9a"/><circle cx="6" cy="6" r="2.2" fill="#000"/></svg>
<div class="t" style="left:144px;top:427px;letter-spacing:-0.2px">Descrizione estesa</div>
<svg style="left:128px;top:442px" width="12" height="12" viewBox="0 0 12 12"><circle cx="6" cy="6" r="5.5" fill="#f8f8f8" stroke="#9a9a9a"/></svg>
<div class="t" style="left:144px;top:443px;letter-spacing:-0.2px">Descrizione breve</div>
<svg style="left:128px;top:458px" width="12" height="12" viewBox="0 0 12 12"><circle cx="6" cy="6" r="5.5" fill="#f8f8f8" stroke="#9a9a9a"/></svg>
<div class="t" style="left:144px;top:459px;letter-spacing:-0.2px">Note</div>
<div class="a" style="left:1px;top:651px;width:1344px;height:22px;background:#f0f0f0;border-top:3px solid #fff"></div>
<div class="a" style="left:1px;top:654px;width:1344px;height:1px;background:#a0a0a0"></div>
<div class="a" style="left:1px;top:671px;width:1344px;height:2px;background:#fff"></div>
<div class="a" style="left:2px;top:655px;width:1036px;height:17px;border-left:1px solid #a0a0a0;border-right:1px solid #fff"></div>
<div class="a" style="left:1041px;top:655px;width:66px;height:17px;border-left:1px solid #a0a0a0;border-right:1px solid #fff"></div>
<div class="t" style="left:1041px;top:659px;width:66px;text-align:center;color:#000">v. 13.00c</div>
<div class="a" style="left:1110px;top:655px;width:156px;height:17px;border-left:1px solid #a0a0a0;border-right:1px solid #fff"></div>
<div class="a" style="left:1269px;top:655px;width:30px;height:17px;border-left:1px solid #a0a0a0;border-right:1px solid #fff"></div>
<div class="t" style="left:1269px;top:659px;width:30px;text-align:center;color:#a0a0a0">MAIU</div>
<div class="a" style="left:1303px;top:655px;width:27px;height:17px;border-left:1px solid #a0a0a0;border-right:1px solid #fff"></div>
<div class="t" style="left:1303px;top:659px;width:27px;text-align:center;color:#000">NUM</div>
<svg style="left:1335px;top:662px" width="10" height="10" viewBox="0 0 10 10"><path d="M9 1 L1 9 M9 5 L5 9" stroke="#a0a0a0" stroke-width="1.2"/></svg>
<div class="a" style="left:677px;top:113px;width:496px;height:507px;background:#f0f0f0;border:1px solid #c0c0c0;border-radius:8px;box-shadow:0 8px 30px rgba(0,0,0,0.3)"></div>
<div class="a" style="left:678px;top:114px;width:494px;height:24px;background:#eef3fa;border-radius:7px 7px 0 0"></div>
<div class="t" style="left:682px;top:120px;font-size:12px;letter-spacing:-0.07px;color:#000">Selezione tipologia omogenea all. II.2 bis - D. Lgs. 36/2023</div>
<svg style="left:1151px;top:119px" width="12" height="12" viewBox="0 0 12 12"><path d="M0.5 0.5 L11.5 11.5 M11.5 0.5 L0.5 11.5" stroke="#222" stroke-width="1.2"/></svg>
<div class="a" style="left:678px;top:138px;width:477px;height:439px;background:#fff"></div>
<div class="hdr" style="left:678px;top:138px;width:476px;height:25px;border-bottom:1px solid #000;border-top:1px solid #000;border-left:1px solid #000"></div>
<div class="a" style="left:727px;top:139px;width:1px;height:23px;background:#000"></div>
<div class="a" style="left:1123px;top:139px;width:1px;height:23px;background:#000"></div>
<div class="t" style="left:685px;top:146px;font-size:12px;font-weight:bold;color:#fff">SIGLA</div>
<div class="t" style="left:844px;width:160px;text-align:center;top:146px;font-size:12px;font-weight:bold;color:#fff">DESCRIZIONE</div>
<div class="a" style="left:678px;top:163px;width:446px;height:18px;background:#9bb3d3"></div>
<div class="a" style="left:678px;top:180px;width:477px;height:1px;background:#a0a0a0"></div>
<div class="t" style="left:680px;top:167px">TOL1</div>
<div class="t" style="left:729px;top:167px;letter-spacing:-0.05px">Opere edili su edifici e manufatti non soggetti a tutela dei beni culturali</div>
<svg style="left:1129px;top:165px" width="14" height="14" viewBox="0 0 14 14"><circle cx="7" cy="7" r="7" fill="#3a7dc2"/><text x="7" y="11.5" text-anchor="middle" font-family="Liberation Sans" font-weight="bold" font-size="11" fill="#fff">?</text></svg>
<div class="a" style="left:678px;top:181px;width:446px;height:18px;background:#f0f9fe"></div>
<div class="a" style="left:678px;top:198px;width:477px;height:1px;background:#a0a0a0"></div>
<div class="t" style="left:680px;top:185px">TOL2</div>
<div class="t" style="left:729px;top:185px;letter-spacing:-0.05px">Opere edili su edifici e manufatti soggetti a tutela dei beni culturali</div>
<svg style="left:1129px;top:183px" width="14" height="14" viewBox="0 0 14 14"><circle cx="7" cy="7" r="7" fill="#3a7dc2"/><text x="7" y="11.5" text-anchor="middle" font-family="Liberation Sans" font-weight="bold" font-size="11" fill="#fff">?</text></svg>
<div class="a" style="left:678px;top:199px;width:446px;height:31px;background:#ffffff"></div>
<div class="a" style="left:678px;top:229px;width:477px;height:1px;background:#a0a0a0"></div>
<div class="t" style="left:680px;top:209px">TOL3</div>
<div class="t" style="left:729px;top:202px;line-height:13px;letter-spacing:-0.05px">Scavi archeologici, restauri specialistici di beni del patrimonio culturale e di<br>interesse storico</div>
<svg style="left:1129px;top:201px" width="14" height="14" viewBox="0 0 14 14"><circle cx="7" cy="7" r="7" fill="#3a7dc2"/><text x="7" y="11.5" text-anchor="middle" font-family="Liberation Sans" font-weight="bold" font-size="11" fill="#fff">?</text></svg>
<div class="a" style="left:678px;top:230px;width:446px;height:31px;background:#f0f9fe"></div>
<div class="a" style="left:678px;top:260px;width:477px;height:1px;background:#a0a0a0"></div>
<div class="t" style="left:680px;top:240px">TOL4</div>
<div class="t" style="left:729px;top:233px;line-height:13px;letter-spacing:-0.05px">Lavori di movimento terra, demolizioni, opere di protezione ambientale,<br>ingegneria naturalistica e opere a verde</div>
<svg style="left:1129px;top:232px" width="14" height="14" viewBox="0 0 14 14"><circle cx="7" cy="7" r="7" fill="#3a7dc2"/><text x="7" y="11.5" text-anchor="middle" font-family="Liberation Sans" font-weight="bold" font-size="11" fill="#fff">?</text></svg>
<div class="a" style="left:678px;top:261px;width:446px;height:18px;background:#ffffff"></div>
<div class="a" style="left:678px;top:278px;width:477px;height:1px;background:#a0a0a0"></div>
<div class="t" style="left:680px;top:265px">TOL5</div>
<div class="t" style="left:729px;top:265px;letter-spacing:-0.05px">Pavimentazioni in conglomerato bituminoso</div>
<svg style="left:1129px;top:263px" width="14" height="14" viewBox="0 0 14 14"><circle cx="7" cy="7" r="7" fill="#3a7dc2"/><text x="7" y="11.5" text-anchor="middle" font-family="Liberation Sans" font-weight="bold" font-size="11" fill="#fff">?</text></svg>
<div class="a" style="left:678px;top:279px;width:446px;height:18px;background:#f0f9fe"></div>
<div class="a" style="left:678px;top:296px;width:477px;height:1px;background:#a0a0a0"></div>
<div class="t" style="left:680px;top:283px">TOL6</div>
<div class="t" style="left:729px;top:283px;letter-spacing:-0.05px">Strutture, opere di ingegneria e manufatti in acciaio</div>
<svg style="left:1129px;top:281px" width="14" height="14" viewBox="0 0 14 14"><circle cx="7" cy="7" r="7" fill="#3a7dc2"/><text x="7" y="11.5" text-anchor="middle" font-family="Liberation Sans" font-weight="bold" font-size="11" fill="#fff">?</text></svg>
<div class="a" style="left:678px;top:297px;width:446px;height:31px;background:#ffffff"></div>
<div class="a" style="left:678px;top:327px;width:477px;height:1px;background:#a0a0a0"></div>
<div class="t" style="left:680px;top:307px">TOL7</div>
<div class="t" style="left:729px;top:300px;line-height:13px;letter-spacing:-0.05px">Strutture, opere di ingegneria e manufatti in calcestruzzo armato, anche<br>prefabbricato</div>
<svg style="left:1129px;top:299px" width="14" height="14" viewBox="0 0 14 14"><circle cx="7" cy="7" r="7" fill="#3a7dc2"/><text x="7" y="11.5" text-anchor="middle" font-family="Liberation Sans" font-weight="bold" font-size="11" fill="#fff">?</text></svg>
<div class="a" style="left:678px;top:328px;width:446px;height:18px;background:#f0f9fe"></div>
<div class="a" style="left:678px;top:345px;width:477px;height:1px;background:#a0a0a0"></div>
<div class="t" style="left:680px;top:332px">TOL8</div>
<div class="t" style="left:729px;top:332px;letter-spacing:-0.05px">Strutture, opere di ingegneria e manufatti in legno</div>
<svg style="left:1129px;top:330px" width="14" height="14" viewBox="0 0 14 14"><circle cx="7" cy="7" r="7" fill="#3a7dc2"/><text x="7" y="11.5" text-anchor="middle" font-family="Liberation Sans" font-weight="bold" font-size="11" fill="#fff">?</text></svg>
<div class="a" style="left:678px;top:346px;width:446px;height:18px;background:#ffffff"></div>
<div class="a" style="left:678px;top:363px;width:477px;height:1px;background:#a0a0a0"></div>
<div class="t" style="left:680px;top:350px">TOL9</div>
<div class="t" style="left:729px;top:350px;letter-spacing:-0.05px">Gallerie e opere d'arte nel sottosuolo realizzate con metodo tradizionale</div>
<svg style="left:1129px;top:348px" width="14" height="14" viewBox="0 0 14 14"><circle cx="7" cy="7" r="7" fill="#3a7dc2"/><text x="7" y="11.5" text-anchor="middle" font-family="Liberation Sans" font-weight="bold" font-size="11" fill="#fff">?</text></svg>
<div class="a" style="left:678px;top:364px;width:446px;height:18px;background:#f0f9fe"></div>
<div class="a" style="left:678px;top:381px;width:477px;height:1px;background:#a0a0a0"></div>
<div class="t" style="left:680px;top:368px">TOL10</div>
<div class="t" style="left:729px;top:368px;letter-spacing:-0.05px">Gallerie e opere d'arte nel sottosuolo realizzate con metodo meccanizzato</div>
<svg style="left:1129px;top:366px" width="14" height="14" viewBox="0 0 14 14"><circle cx="7" cy="7" r="7" fill="#3a7dc2"/><text x="7" y="11.5" text-anchor="middle" font-family="Liberation Sans" font-weight="bold" font-size="11" fill="#fff">?</text></svg>
<div class="a" style="left:678px;top:382px;width:446px;height:18px;background:#ffffff"></div>
<div class="a" style="left:678px;top:399px;width:477px;height:1px;background:#a0a0a0"></div>
<div class="t" style="left:680px;top:386px">TOL11</div>
<div class="t" style="left:729px;top:386px;letter-spacing:-0.05px">Acquedotti, gasdotti, opere di irrigazione e fognature</div>
<svg style="left:1129px;top:384px" width="14" height="14" viewBox="0 0 14 14"><circle cx="7" cy="7" r="7" fill="#3a7dc2"/><text x="7" y="11.5" text-anchor="middle" font-family="Liberation Sans" font-weight="bold" font-size="11" fill="#fff">?</text></svg>
<div class="a" style="left:678px;top:400px;width:446px;height:18px;background:#f0f9fe"></div>
<div class="a" style="left:678px;top:417px;width:477px;height:1px;background:#a0a0a0"></div>
<div class="t" style="left:680px;top:404px">TOL12</div>
<div class="t" style="left:729px;top:404px;letter-spacing:-0.05px">Opere marittime e lavori di dragaggio, opere fluviali e di difesa del suolo</div>
<svg style="left:1129px;top:402px" width="14" height="14" viewBox="0 0 14 14"><circle cx="7" cy="7" r="7" fill="#3a7dc2"/><text x="7" y="11.5" text-anchor="middle" font-family="Liberation Sans" font-weight="bold" font-size="11" fill="#fff">?</text></svg>
<div class="a" style="left:678px;top:418px;width:446px;height:31px;background:#ffffff"></div>
<div class="a" style="left:678px;top:448px;width:477px;height:1px;background:#a0a0a0"></div>
<div class="t" style="left:680px;top:428px">TOL13</div>
<div class="t" style="left:729px;top:421px;line-height:13px;letter-spacing:-0.05px">Impianti per la produzione, trasformazione e distribuzione di energia elettrica in<br>alta e media tensione per la trazione elettrica e l'illuminazione pubblica</div>
<svg style="left:1129px;top:420px" width="14" height="14" viewBox="0 0 14 14"><circle cx="7" cy="7" r="7" fill="#3a7dc2"/><text x="7" y="11.5" text-anchor="middle" font-family="Liberation Sans" font-weight="bold" font-size="11" fill="#fff">?</text></svg>
<div class="a" style="left:678px;top:449px;width:446px;height:18px;background:#f0f9fe"></div>
<div class="a" style="left:678px;top:466px;width:477px;height:1px;background:#a0a0a0"></div>
<div class="t" style="left:680px;top:453px">TOL14</div>
<div class="t" style="left:729px;top:453px;letter-spacing:-0.05px">Impianti elettrici, tecnologici, radiotelefonici e antintrusione</div>
<svg style="left:1129px;top:451px" width="14" height="14" viewBox="0 0 14 14"><circle cx="7" cy="7" r="7" fill="#3a7dc2"/><text x="7" y="11.5" text-anchor="middle" font-family="Liberation Sans" font-weight="bold" font-size="11" fill="#fff">?</text></svg>
<div class="a" style="left:678px;top:467px;width:446px;height:18px;background:#ffffff"></div>
<div class="a" style="left:678px;top:484px;width:477px;height:1px;background:#a0a0a0"></div>
<div class="t" style="left:680px;top:471px">TOL15</div>
<div class="t" style="left:729px;top:471px;letter-spacing:-0.05px">Impianti meccanici, termici, di condizionamento, idrico sanitari e trasportatori</div>
<svg style="left:1129px;top:469px" width="14" height="14" viewBox="0 0 14 14"><circle cx="7" cy="7" r="7" fill="#3a7dc2"/><text x="7" y="11.5" text-anchor="middle" font-family="Liberation Sans" font-weight="bold" font-size="11" fill="#fff">?</text></svg>
<div class="a" style="left:678px;top:485px;width:446px;height:18px;background:#f0f9fe"></div>
<div class="a" style="left:678px;top:502px;width:477px;height:1px;background:#a0a0a0"></div>
<div class="t" style="left:680px;top:489px">TOL16</div>
<div class="t" style="left:729px;top:489px;letter-spacing:-0.05px">Impianti di potabilizzazione e depurazione</div>
<svg style="left:1129px;top:487px" width="14" height="14" viewBox="0 0 14 14"><circle cx="7" cy="7" r="7" fill="#3a7dc2"/><text x="7" y="11.5" text-anchor="middle" font-family="Liberation Sans" font-weight="bold" font-size="11" fill="#fff">?</text></svg>
<div class="a" style="left:678px;top:503px;width:446px;height:18px;background:#ffffff"></div>
<div class="a" style="left:678px;top:520px;width:477px;height:1px;background:#a0a0a0"></div>
<div class="t" style="left:680px;top:507px">TOL17</div>
<div class="t" style="left:729px;top:507px;letter-spacing:-0.05px">Impianti di segnalamento, sicurezza del traffico e telecomunicazioni</div>
<svg style="left:1129px;top:505px" width="14" height="14" viewBox="0 0 14 14"><circle cx="7" cy="7" r="7" fill="#3a7dc2"/><text x="7" y="11.5" text-anchor="middle" font-family="Liberation Sans" font-weight="bold" font-size="11" fill="#fff">?</text></svg>
<div class="a" style="left:678px;top:521px;width:446px;height:18px;background:#f0f9fe"></div>
<div class="a" style="left:678px;top:538px;width:477px;height:1px;background:#a0a0a0"></div>
<div class="t" style="left:680px;top:525px">TOL18</div>
<div class="t" style="left:729px;top:525px;letter-spacing:-0.05px">Armamento ferroviario</div>
<svg style="left:1129px;top:523px" width="14" height="14" viewBox="0 0 14 14"><circle cx="7" cy="7" r="7" fill="#3a7dc2"/><text x="7" y="11.5" text-anchor="middle" font-family="Liberation Sans" font-weight="bold" font-size="11" fill="#fff">?</text></svg>
<div class="a" style="left:678px;top:539px;width:446px;height:18px;background:#ffffff"></div>
<div class="a" style="left:678px;top:556px;width:477px;height:1px;background:#a0a0a0"></div>
<div class="t" style="left:680px;top:543px">TOL19</div>
<div class="t" style="left:729px;top:543px;letter-spacing:-0.05px">Opere di fondazione speciale, indagini geologiche e geotecniche</div>
<svg style="left:1129px;top:541px" width="14" height="14" viewBox="0 0 14 14"><circle cx="7" cy="7" r="7" fill="#3a7dc2"/><text x="7" y="11.5" text-anchor="middle" font-family="Liberation Sans" font-weight="bold" font-size="11" fill="#fff">?</text></svg>
<div class="a" style="left:678px;top:557px;width:446px;height:18px;background:#f0f9fe"></div>
<div class="a" style="left:678px;top:574px;width:477px;height:1px;background:#a0a0a0"></div>
<div class="t" style="left:680px;top:561px">TOL20</div>
<div class="t" style="left:729px;top:561px;letter-spacing:-0.05px">Conferimento rifiuti a impianto di smaltimento o recupero</div>
<svg style="left:1129px;top:559px" width="14" height="14" viewBox="0 0 14 14"><circle cx="7" cy="7" r="7" fill="#3a7dc2"/><text x="7" y="11.5" text-anchor="middle" font-family="Liberation Sans" font-weight="bold" font-size="11" fill="#fff">?</text></svg>
<div class="a" style="left:727px;top:163px;width:1px;height:413px;background:#a0a0a0"></div>
<div class="a" style="left:1124px;top:163px;width:1px;height:413px;background:#a0a0a0"></div>
<div class="a" style="left:1154px;top:138px;width:18px;height:439px;background:repeating-conic-gradient(#e6e6e6 0 25%,#fbfbfb 0 50%) 0 0/2px 2px;border-left:2px solid #000;border-top:1px solid #000"></div>
<div class="a" style="left:1156px;top:139px;width:16px;height:17px;background:#f0f0f0;border-right:1px solid #000;border-bottom:2px solid #000;box-shadow:inset 1px 1px 0 #fff"></div>
<svg style="left:1159px;top:144px" width="10" height="5" viewBox="0 0 10 5"><path d="M0 5 L5 0 L10 5Z" fill="#000"/></svg>
<div class="a" style="left:1156px;top:156px;width:16px;height:384px;background:#f0f0f0;border-right:1px solid #000;border-bottom:1px solid #000;box-shadow:inset 1px 1px 0 #fff"></div>
<div class="a" style="left:1155px;top:560px;width:17px;height:17px;background:#f0f0f0;border:1px solid #000;box-shadow:inset 1px 1px 0 #fff"></div>
<svg style="left:1159px;top:566px" width="10" height="5" viewBox="0 0 10 5"><path d="M0 0 L5 5 L10 0Z" fill="#000"/></svg>
<div class="a" style="left:684px;top:586px;width:75px;height:25px;background:#f0f0f0;border:1px solid #fff;border-right:1px solid #696969;border-bottom:1px solid #696969;box-shadow:inset -1px -1px 0 #a0a0a0"></div>
<div class="t" style="left:684px;width:75px;text-align:center;top:593px;font-size:11px">Azzera</div>
<div class="a" style="left:1008px;top:586px;width:75px;height:25px;background:#f0f0f0;border:1px solid #fff;border-right:1px solid #696969;border-bottom:1px solid #696969;box-shadow:inset -1px -1px 0 #a0a0a0"></div>
<div class="t" style="left:1008px;width:75px;text-align:center;top:593px;font-size:11px">OK</div>
<div class="a" style="left:1089px;top:586px;width:75px;height:25px;background:#f0f0f0;border:1px solid #fff;border-right:1px solid #696969;border-bottom:1px solid #696969;box-shadow:inset -1px -1px 0 #a0a0a0"></div>
<div class="t" style="left:1089px;width:75px;text-align:center;top:593px;font-size:11px">Annulla</div>
</body></html>
